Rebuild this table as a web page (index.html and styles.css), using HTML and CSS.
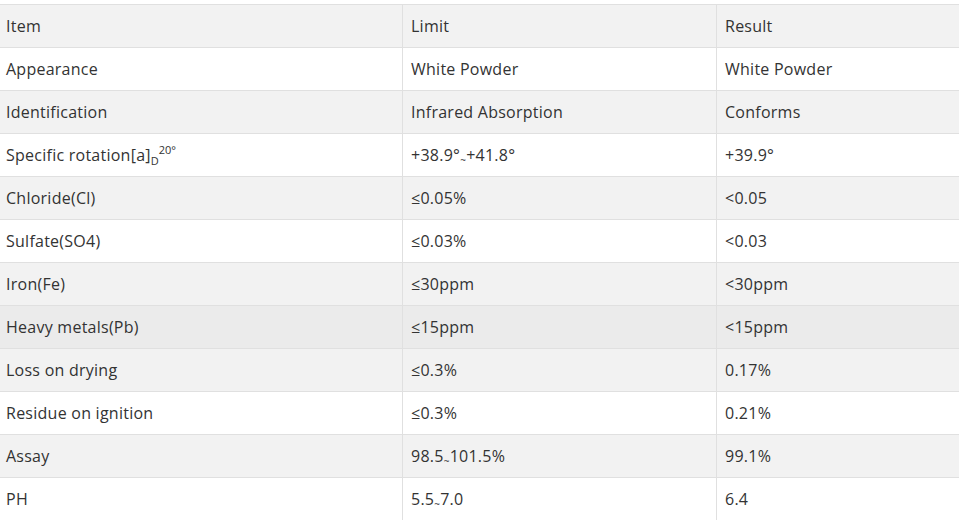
FILE: index.html
```html
<!DOCTYPE html>
<html>
<head>
<meta charset="utf-8">
<link rel="stylesheet" href="styles.css">
</head>
<body>
<div class="wrap">
<table class="spec">
  <colgroup><col class="c1"><col class="c2"><col class="c3"></colgroup>
  <tbody>
    <tr class="alt"><td>Item</td><td>Limit</td><td>Result</td></tr>
    <tr><td>Appearance</td><td>White Powder</td><td>White Powder</td></tr>
    <tr class="alt"><td>Identification</td><td>Infrared Absorption</td><td>Conforms</td></tr>
    <tr><td>Specific rotation[a]<sub>D</sub><sup>20°</sup></td><td>+38.9°<span class="tl">~</span>+41.8°</td><td>+39.9°</td></tr>
    <tr class="alt"><td>Chloride(Cl)</td><td>≤0.05%</td><td>&lt;0.05</td></tr>
    <tr><td>Sulfate(SO4)</td><td>≤0.03%</td><td>&lt;0.03</td></tr>
    <tr class="alt"><td>Iron(Fe)</td><td>≤30ppm</td><td>&lt;30ppm</td></tr>
    <tr class="hover"><td>Heavy metals(Pb)</td><td>≤15ppm</td><td>&lt;15ppm</td></tr>
    <tr class="alt"><td>Loss on drying</td><td>≤0.3%</td><td>0.17%</td></tr>
    <tr><td>Residue on ignition</td><td>≤0.3%</td><td>0.21%</td></tr>
    <tr class="alt"><td>Assay</td><td>98.5<span class="tl">~</span>101.5%</td><td>99.1%</td></tr>
    <tr><td>PH</td><td>5.5<span class="tl">~</span>7.0</td><td>6.4</td></tr>
  </tbody>
</table>
</div>
</body>
</html>
```
FILE: styles.css
```css
html, body {
  margin: 0;
  padding: 0;
  background: #fff;
}
.wrap {
  padding-top: 4px;
  overflow: hidden;
  width: 959px;
  height: 516px;
}
.spec {
  border-collapse: collapse;
  table-layout: fixed;
  width: 965px;
  margin-left: -2px;
  font-family: "Open Sans", sans-serif;
  font-size: 16px;
  letter-spacing: 0.25px;
  color: #333;
}
.c1 { width: 404px; }
.c2 { width: 314px; }
.c3 { width: 247px; }
.spec td {
  border: 1px solid #e0e0e0;
  height: 43px;
  padding: 0 7px;
  box-sizing: border-box;
  vertical-align: middle;
  white-space: nowrap;
  line-height: 20px;
}
.spec td + td { padding-left: 8px; }
.spec tr { background: #fff; }
.spec tr.alt { background: #f2f2f2; }
.spec tr.hover { background: #ebebeb; }
.spec sub, .spec sup {
  font-size: 11px;
  line-height: 0;
  letter-spacing: 0;
}
.spec sub { vertical-align: -4px; }
.spec sup { vertical-align: 7px; }
.tl {
  font-size: 10px;
  line-height: 0;
  vertical-align: -3px;
}
```
